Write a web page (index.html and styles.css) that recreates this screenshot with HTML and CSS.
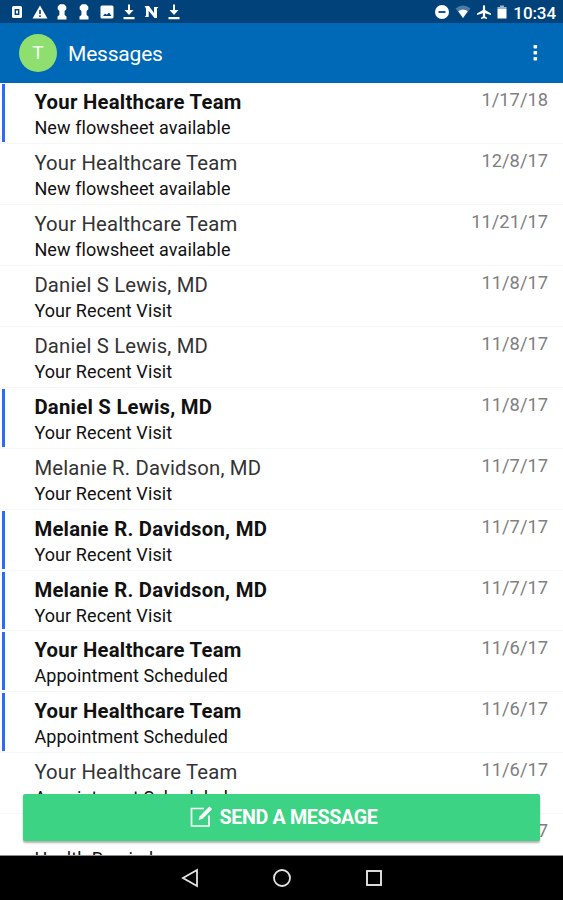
FILE: index.html
```html
<!DOCTYPE html>
<html lang="en">
<head>
    <meta charset="UTF-8">
    <meta name="viewport" content="width=device-width, initial-scale=1.0">
    <title>Messages</title>
    <link rel="stylesheet" href="styles.css">
</head>
<body>
    <div class="screen">
        <div class="status-bar">
            <div class="status-left">
                <svg width="12" height="14" viewBox="0 0 12 14"><rect x="1" y="1" width="10" height="12" rx="1.5" fill="#fff"/><rect x="3.6" y="4" width="4.8" height="6" fill="#02427a"/><rect x="5" y="5.5" width="2" height="3" fill="#fff"/></svg>
                <svg width="16" height="14" viewBox="0 0 16 14"><path d="M8 0.5L15.5 13.5H0.5Z" fill="#fff"/><path d="M8 5v4M8 10.2v1.8" stroke="#02427a" stroke-width="1.6"/></svg>
                <svg width="10" height="16" viewBox="0 0 10 16"><path d="M3 0.3H7L9.3 2.6V5.2L7.6 7V11L9.5 12.5V15.5H0.5V12.5L2.4 11V7L0.7 5.2V2.6Z" fill="#fff"/></svg>
                <svg width="10" height="16" viewBox="0 0 10 16"><path d="M3 0.3H7L9.3 2.6V5.2L7.6 7V11L9.5 12.5V15.5H0.5V12.5L2.4 11V7L0.7 5.2V2.6Z" fill="#fff"/></svg>
                <svg width="14" height="14" viewBox="0 0 14 14"><rect x="0.5" y="0.5" width="13" height="13" rx="1.5" fill="#fff"/><path d="M3 11l2-2.6 1.8 1.4 2.2-2.4L11.5 11Z" fill="#02427a"/></svg>
                <svg width="12" height="16" viewBox="0 0 12 16"><path d="M5 0.5h2V6h3.5L6 11 1.5 6H5ZM0.5 13h11v2.3H0.5Z" fill="#fff"/></svg>
                <svg width="15" height="14" viewBox="0 0 15 14"><path d="M0.5 1H5L10 8V2H14.5L13 3.5V13H10.5L4.7 5.8V12H0.8L2 10.5V3.5Z" fill="#fff"/></svg>
                <svg width="12" height="16" viewBox="0 0 12 16"><path d="M5 0.5h2V6h3.5L6 11 1.5 6H5ZM0.5 13h11v2.3H0.5Z" fill="#fff"/></svg>
            </div>
            <div class="status-right">
                <svg width="14" height="14" viewBox="0 0 14 14"><circle cx="7" cy="7" r="7" fill="#fff"/><path d="M3.5 7h7" stroke="#02427a" stroke-width="1.8"/></svg>
                <svg width="16" height="14" viewBox="0 0 16 14"><path d="M0.5 3.5Q8-2.5 15.5 3.5L8 13Z" fill="#4a7ba6"/><path d="M3.3 6.2Q8 2.8 12.7 6.2L8 13Z" fill="#fff"/></svg>
                <svg width="14" height="14" viewBox="0 0 14 14"><path d="M7 0q1.1 0 1.1 1.5v3.6L14 8.5V10L8.1 8.3v3.2L10 12.8V14l-3-0.8L4 14v-1.2l1.9-1.3V8.3L0 10V8.5l5.9-3.4V1.5Q5.9 0 7 0Z" fill="#fff"/></svg>
                <svg width="10" height="14" viewBox="0 0 10 14"><path d="M3 0.5h4V2h2.5v2.5h-9V2H3Z" fill="#9ab5cd"/><rect x="0.5" y="4" width="9" height="9.5" fill="#fff"/></svg>
                <span class="clock">10:34</span>
            </div>
        </div>

        <div class="app-bar">
            <div class="avatar">T</div>
            <h1 class="title">Messages</h1>
            <svg class="menu" width="5" height="16" viewBox="0 0 5 16" fill="#fff"><rect x="0.5" y="0" width="3.6" height="3.6" rx="0.8"/><rect x="0.5" y="6" width="3.6" height="3.6" rx="0.8"/><rect x="0.5" y="12" width="3.6" height="3.6" rx="0.8"/></svg>
        </div>

        <div class="messages">
            <div class="message unread">
                <div class="top"><span class="sender">Your Healthcare Team</span><span class="date">1/17/18</span></div>
                <div class="subject">New flowsheet available</div>
            </div>
            <div class="message">
                <div class="top"><span class="sender">Your Healthcare Team</span><span class="date">12/8/17</span></div>
                <div class="subject">New flowsheet available</div>
            </div>
            <div class="message">
                <div class="top"><span class="sender">Your Healthcare Team</span><span class="date">11/21/17</span></div>
                <div class="subject">New flowsheet available</div>
            </div>
            <div class="message">
                <div class="top"><span class="sender">Daniel S Lewis, MD</span><span class="date">11/8/17</span></div>
                <div class="subject">Your Recent Visit</div>
            </div>
            <div class="message">
                <div class="top"><span class="sender">Daniel S Lewis, MD</span><span class="date">11/8/17</span></div>
                <div class="subject">Your Recent Visit</div>
            </div>
            <div class="message unread">
                <div class="top"><span class="sender">Daniel S Lewis, MD</span><span class="date">11/8/17</span></div>
                <div class="subject">Your Recent Visit</div>
            </div>
            <div class="message">
                <div class="top"><span class="sender">Melanie R. Davidson, MD</span><span class="date">11/7/17</span></div>
                <div class="subject">Your Recent Visit</div>
            </div>
            <div class="message unread">
                <div class="top"><span class="sender">Melanie R. Davidson, MD</span><span class="date">11/7/17</span></div>
                <div class="subject">Your Recent Visit</div>
            </div>
            <div class="message unread">
                <div class="top"><span class="sender">Melanie R. Davidson, MD</span><span class="date">11/7/17</span></div>
                <div class="subject">Your Recent Visit</div>
            </div>
            <div class="message unread">
                <div class="top"><span class="sender">Your Healthcare Team</span><span class="date">11/6/17</span></div>
                <div class="subject">Appointment Scheduled</div>
            </div>
            <div class="message unread">
                <div class="top"><span class="sender">Your Healthcare Team</span><span class="date">11/6/17</span></div>
                <div class="subject">Appointment Scheduled</div>
            </div>
            <div class="message">
                <div class="top"><span class="sender">Your Healthcare Team</span><span class="date">11/6/17</span></div>
                <div class="subject">Appointment Scheduled</div>
            </div>
            <div class="message">
                <div class="top"><span class="sender">Your Healthcare Team</span><span class="date">11/6/17</span></div>
                <div class="subject">Health Reminder</div>
            </div>
            <button class="send-button">
                <svg width="23" height="23" viewBox="0 0 23 23" fill="none" stroke="#fff"><path d="M14 2.5H1.5V20H19V9.5" stroke-width="1.7"/><path d="M8.6 14L9.8 10.2L19.4 0.4L22.2 3L12.6 12.8Z" fill="#fff" stroke="none"/></svg>
                <span>SEND A MESSAGE</span>
            </button>
        </div>

        <div class="nav-bar">
            <svg width="18" height="20" viewBox="0 0 18 20"><path d="M16 2V18L2 10Z" fill="none" stroke="#e4e4e4" stroke-width="1.8"/></svg>
            <svg width="20" height="20" viewBox="0 0 20 20"><circle cx="10" cy="10" r="8" fill="none" stroke="#e4e4e4" stroke-width="1.8"/></svg>
            <svg width="18" height="18" viewBox="0 0 18 18"><rect x="2" y="2" width="14" height="14" fill="none" stroke="#e4e4e4" stroke-width="1.9"/></svg>
        </div>
    </div>
</body>
</html>
```
FILE: styles.css
```css
body {
    margin: 0;
    font-family: Roboto, "Liberation Sans", sans-serif;
    background: #fff;
}
.screen {
    display: flex;
    flex-direction: column;
    height: 900px;
    overflow: hidden;
}
.status-bar {
    display: flex;
    justify-content: space-between;
    align-items: center;
    height: 23px;
    padding: 1px 7px 0 6px;
    box-sizing: border-box;
    background: #02427a;
    color: #fff;
    flex-shrink: 0;
}
.status-left {
    display: grid;
    grid-template-columns: repeat(8, 22.4px);
    align-items: center;
    justify-items: center;
}
.status-right {
    display: flex;
    align-items: center;
    gap: 6px;
}
.clock {
    font-size: 17px;
    font-weight: 500;
    line-height: 22px;
    letter-spacing: -0.1px;
    padding-top: 1px;
}
.app-bar {
    display: flex;
    align-items: center;
    height: 60px;
    padding: 0 25px 0 19px;
    background: #0069b7;
    color: #fff;
    flex-shrink: 0;
}
.avatar {
    width: 38px;
    height: 38px;
    border-radius: 50%;
    background: #8fdf70;
    color: #f1fbec;
    font-size: 19px;
    line-height: 38px;
    text-align: center;
}
.title {
    margin: 1px auto 0 11px;
    font-size: 21px;
    font-weight: 400;
    letter-spacing: -0.2px;
}
.messages {
    position: relative;
    flex: 1;
    overflow: hidden;
    border-bottom: 1px solid #8a8a8a;
}
.message {
    position: relative;
    height: 60.95px;
    padding: 6px 15px 0 34.4px;
    box-sizing: border-box;
    border-bottom: 1px solid #f5f7f8;
}
.message.unread::before {
    content: "";
    position: absolute;
    left: 2px;
    top: 1px;
    bottom: 1px;
    width: 3px;
    background: #2a6df4;
}
.top {
    display: flex;
    justify-content: space-between;
    line-height: 26px;
}
.sender {
    font-size: 20.3px;
    letter-spacing: 0.17px;
    color: #333;
}
.unread .sender {
    font-weight: 700;
    letter-spacing: 0.26px;
    color: #111;
}
.date {
    font-size: 18.3px;
    line-height: 22.4px;
    color: #808080;
}
.subject {
    font-size: 18px;
    line-height: 26px;
    letter-spacing: 0.09px;
    color: #111;
}
.send-button {
    position: absolute;
    left: 23px;
    right: 23px;
    bottom: 14.5px;
    height: 47px;
    display: flex;
    align-items: center;
    justify-content: center;
    gap: 6px;
    padding: 1px 0 0 5px;
    border: none;
    border-radius: 2px;
    background: #3dd384;
    box-shadow: 0 2px 2px rgba(0, 0, 0, 0.3);
    color: #fff;
    font-family: inherit;
    font-size: 19.7px;
    font-weight: 700;
    letter-spacing: -0.35px;
}
.nav-bar {
    display: flex;
    align-items: center;
    justify-content: center;
    gap: 73px;
    height: 44px;
    background: #000;
    flex-shrink: 0;
}
```
